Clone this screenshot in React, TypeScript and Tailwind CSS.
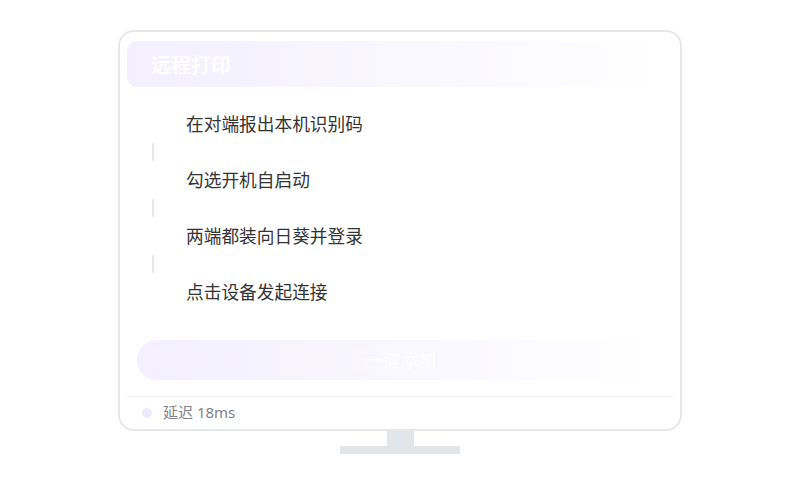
const steps = ['在对端报出本机识别码', '勾选开机自启动', '两端都装向日葵并登录', '点击设备发起连接'];

export default function App() {
  return (
    <div
      className="w-[800px] h-[500px] bg-white flex flex-col items-center"
      style={{ fontFamily: '"Noto Sans", "Noto Sans CJK SC", sans-serif' }}
    >
      <div className="mt-[30px] w-[564px] h-[401px] border-2 border-[#e5e7eb] rounded-[16px] bg-white flex flex-col px-[7px] pt-[9px]">
        <div className="h-[46px] rounded-[10px] bg-gradient-to-r from-[#f3efff] to-[#ffffff] flex items-center pl-[24px] pt-[3px]">
          <span className="text-[20px] font-semibold text-white leading-none">远程打印</span>
        </div>

        <div className="mt-[26px] flex flex-col pl-[25px]">
          {steps.map((s, i) => (
            <div key={s} className="flex flex-col">
              <div className="h-[24px] flex items-center pl-[34px] text-[17.7px] text-[#333333] leading-none">{s}</div>
              {i < steps.length - 1 && (
                <div className="mt-[6px] mb-[8px] w-[2px] h-[18px] bg-[#e5e7eb] rounded-full" />
              )}
            </div>
          ))}
        </div>

        <div className="mt-[35px] mx-[10px] h-[40px] rounded-full bg-gradient-to-r from-[#f3efff] to-[#ffffff] flex items-center justify-center">
          <span className="text-[18px] text-white leading-none">一键添加</span>
        </div>

        <div className="mt-[16px] h-px bg-[#eceef1]" />

        <div className="flex-1 flex items-center gap-[11px] pl-[15px] pb-[1px]">
          <div className="w-[10px] h-[10px] rounded-full bg-[#ede9fe]" />
          <span className="text-[15px] text-[#7d828c] leading-none">延迟 18ms</span>
        </div>
      </div>
      <div className="w-[27px] h-[15px] bg-[#e2e6eb]" />
      <div className="w-[120px] h-[8px] bg-[#e2e6eb]" />
    </div>
  );
}
